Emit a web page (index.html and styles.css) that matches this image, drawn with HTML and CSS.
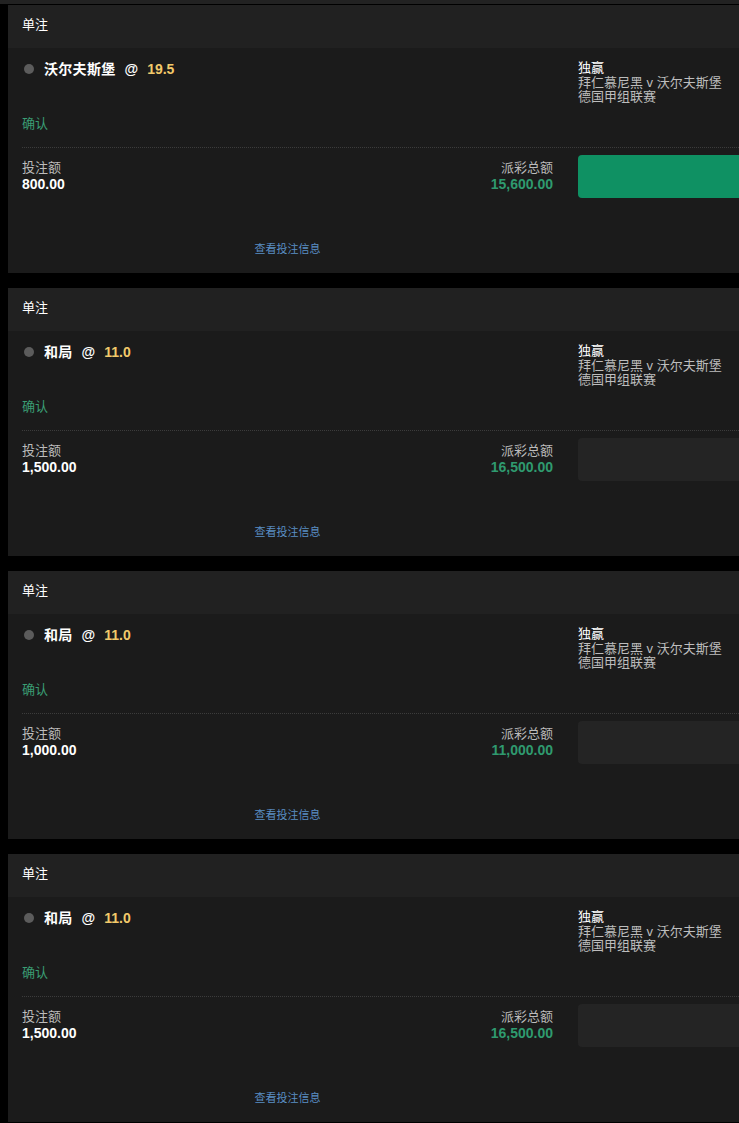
FILE: index.html
```html
<!DOCTYPE html>
<html lang="zh-CN">
<head>
<meta charset="utf-8">
<title>单注</title>
<link rel="stylesheet" href="styles.css">
</head>
<body>
<div class="topstrip"></div>
<div class="list">
  <section class="card">
    <div class="head">单注</div>
    <div class="sel-grid">
      <div class="sel-left">
        <div class="sel"><span class="dot"></span><span class="name">沃尔夫斯堡</span><span class="at">@</span><span class="odds">19.5</span></div>
        <div class="confirm">确认</div>
      </div>
      <div class="market">
        <div class="mtype">独赢</div>
        <div class="mline">拜仁慕尼黑 v 沃尔夫斯堡</div>
        <div class="mline">德国甲组联赛</div>
      </div>
    </div>
    <div class="divider"></div>
    <div class="bet-grid">
      <div class="bet-left">
        <div class="amounts">
          <div class="stake"><div class="label">投注额</div><div class="val">800.00</div></div>
          <div class="payout"><div class="label">派彩总额</div><div class="val green">15,600.00</div></div>
        </div>
        <div class="link">查看投注信息</div>
      </div>
      <div class="box box-green"></div>
    </div>
  </section>

  <section class="card">
    <div class="head">单注</div>
    <div class="sel-grid">
      <div class="sel-left">
        <div class="sel"><span class="dot"></span><span class="name">和局</span><span class="at">@</span><span class="odds">11.0</span></div>
        <div class="confirm">确认</div>
      </div>
      <div class="market">
        <div class="mtype">独赢</div>
        <div class="mline">拜仁慕尼黑 v 沃尔夫斯堡</div>
        <div class="mline">德国甲组联赛</div>
      </div>
    </div>
    <div class="divider"></div>
    <div class="bet-grid">
      <div class="bet-left">
        <div class="amounts">
          <div class="stake"><div class="label">投注额</div><div class="val">1,500.00</div></div>
          <div class="payout"><div class="label">派彩总额</div><div class="val green">16,500.00</div></div>
        </div>
        <div class="link">查看投注信息</div>
      </div>
      <div class="box box-gray"></div>
    </div>
  </section>

  <section class="card">
    <div class="head">单注</div>
    <div class="sel-grid">
      <div class="sel-left">
        <div class="sel"><span class="dot"></span><span class="name">和局</span><span class="at">@</span><span class="odds">11.0</span></div>
        <div class="confirm">确认</div>
      </div>
      <div class="market">
        <div class="mtype">独赢</div>
        <div class="mline">拜仁慕尼黑 v 沃尔夫斯堡</div>
        <div class="mline">德国甲组联赛</div>
      </div>
    </div>
    <div class="divider"></div>
    <div class="bet-grid">
      <div class="bet-left">
        <div class="amounts">
          <div class="stake"><div class="label">投注额</div><div class="val">1,000.00</div></div>
          <div class="payout"><div class="label">派彩总额</div><div class="val green">11,000.00</div></div>
        </div>
        <div class="link">查看投注信息</div>
      </div>
      <div class="box box-gray"></div>
    </div>
  </section>

  <section class="card">
    <div class="head">单注</div>
    <div class="sel-grid">
      <div class="sel-left">
        <div class="sel"><span class="dot"></span><span class="name">和局</span><span class="at">@</span><span class="odds">11.0</span></div>
        <div class="confirm">确认</div>
      </div>
      <div class="market">
        <div class="mtype">独赢</div>
        <div class="mline">拜仁慕尼黑 v 沃尔夫斯堡</div>
        <div class="mline">德国甲组联赛</div>
      </div>
    </div>
    <div class="divider"></div>
    <div class="bet-grid">
      <div class="bet-left">
        <div class="amounts">
          <div class="stake"><div class="label">投注额</div><div class="val">1,500.00</div></div>
          <div class="payout"><div class="label">派彩总额</div><div class="val green">16,500.00</div></div>
        </div>
        <div class="link">查看投注信息</div>
      </div>
      <div class="box box-gray"></div>
    </div>
  </section>
</div>
</body>
</html>
```

FILE: styles.css
```css
html, body {
  margin: 0;
  padding: 0;
  background: #000;
  height: 1123px;
  overflow: hidden;
}
body {
  font-family: "Liberation Sans", "Noto Sans CJK SC", sans-serif;
  color: #fff;
  font-size: 13px;
}
.topstrip {
  height: 4px;
  background: #222;
  border-bottom: 1px solid #000;
}
.list {
  display: flex;
  flex-direction: column;
  gap: 15px;
  padding-left: 8px;
}
.card {
  background: #1b1b1b;
  height: 268px;
  display: flex;
  flex-direction: column;
}
.head {
  height: 43px;
  box-sizing: border-box;
  background: #212121;
  padding: 12px 0 0 14px;
  line-height: 16px;
  font-size: 13px;
  color: #fff;
}
.sel-grid, .bet-grid {
  display: grid;
  grid-template-columns: 1fr 161px;
  column-gap: 25px;
  padding-left: 14px;
  align-items: start;
}
.sel-grid {
  padding-top: 13px;
}
.sel {
  display: flex;
  align-items: center;
  gap: 9px;
  line-height: 16px;
  font-weight: bold;
  font-size: 14px;
}
.dot {
  width: 10px;
  height: 10px;
  border-radius: 50%;
  background: #5c5c5c;
  margin: 0 1px 0 2px;
}
.name {
  color: #fff;
  letter-spacing: 0.3px;
}
.at {
  color: #fff;
}
.odds {
  color: #f2c96a;
}
.confirm {
  margin-top: 39px;
  line-height: 16px;
  color: #3a9d74;
  font-size: 13px;
}
.market {
  line-height: 14.5px;
  font-size: 13px;
}
.mtype {
  color: #fff;
}
.mline {
  color: #bdbdbd;
}
.divider {
  margin: 15px 0 0 14px;
  border-top: 1px dotted #3c3c3c;
}
.amounts {
  display: flex;
  justify-content: space-between;
  padding-top: 12px;
  line-height: 16px;
}
.label {
  color: #bcbcbc;
  font-size: 13px;
}
.payout {
  text-align: right;
}
.val {
  font-weight: bold;
  font-size: 14px;
  color: #fff;
}
.val.green {
  color: #2f9a6f;
}
.link {
  margin-top: 50px;
  text-align: center;
  font-size: 11px;
  line-height: 14px;
  color: #5a8ec4;
}
.box {
  margin-top: 7px;
  height: 43px;
  border-radius: 4px 0 0 4px;
}
.box-green {
  background: #0f9163;
}
.box-gray {
  background: #242424;
}
```
